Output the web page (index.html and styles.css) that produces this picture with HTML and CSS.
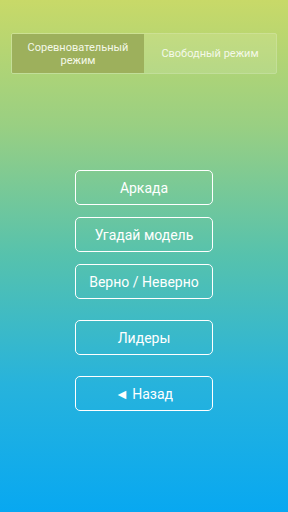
FILE: index.html
```html
<!DOCTYPE html>
<html lang="ru">
<head>
  <meta charset="UTF-8">
  <meta name="viewport" content="width=device-width, initial-scale=1.0">
  <title>Меню</title>
  <link rel="stylesheet" href="styles.css">
</head>
<body>
  <div class="screen">
    <div class="tabs">
      <div class="tab active">Соревновательный<br>режим</div>
      <div class="tab">Свободный режим</div>
    </div>

    <div class="menu">
      <button class="btn">Аркада</button>
      <button class="btn">Угадай модель</button>
      <button class="btn">Верно / Неверно</button>
      <button class="btn spaced">Лидеры</button>
      <button class="btn spaced">◄ Назад</button>
    </div>
  </div>
</body>
</html>
```

FILE: styles.css
```css
body {
  margin: 0;
  font-family: Roboto, 'Noto Sans', sans-serif;
  color: #fff;
}

.screen {
  height: 512px;
  padding: 33px 11px 0;
  box-sizing: border-box;
  background: linear-gradient(to bottom, #c8d968 0%, #98cf83 25%, #56c2ad 50%, #27b3dc 75%, #08a8f1 100%);
}

.tabs {
  display: flex;
  height: 41px;
  border: 1px solid rgba(255, 255, 255, 0.25);
  box-sizing: border-box;
  border-radius: 2px;
  overflow: hidden;
}

.tab {
  flex: 1;
  display: flex;
  align-items: center;
  justify-content: center;
  text-align: center;
  font-size: 11px;
  line-height: 13px;
  color: #f4f8e8;
  background-color: rgba(255, 255, 255, 0.12);
}

.tab.active {
  background-color: #9db05c;
}

.menu {
  display: flex;
  flex-direction: column;
  align-items: center;
  gap: 12px;
  margin-top: 96px;
}

.btn {
  width: 138px;
  height: 35px;
  background: transparent;
  border: 1.5px solid #fff;
  border-radius: 5px;
  color: #fff;
  font-family: Roboto, 'Noto Sans', sans-serif;
  font-size: 14px;
  padding: 0;
}

.btn.spaced {
  margin-top: 9px;
}
```
